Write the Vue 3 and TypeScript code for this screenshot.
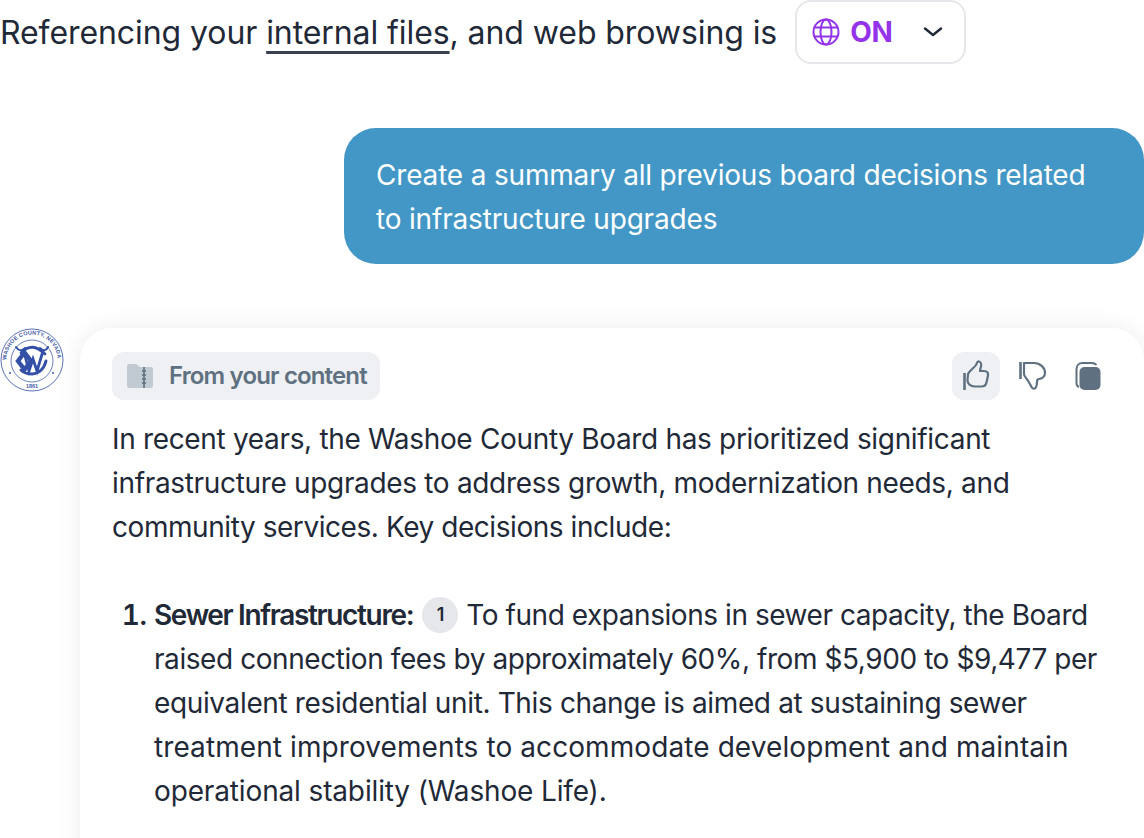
<script setup lang="ts">
interface Line {
  text: string;
  tracking: number;
}

// per-line tracking, the fallback font runs a little different from the original
const intro: Line[] = [
  { text: 'In recent years, the Washoe County Board has prioritized significant', tracking: -0.33 },
  { text: 'infrastructure upgrades to address growth, modernization needs, and', tracking: -0.33 },
  { text: 'community services. Key decisions include:', tracking: -0.44 },
];

const decision: Line[] = [
  { text: 'raised connection fees by approximately 60%, from $5,900 to $9,477 per', tracking: -0.43 },
  { text: 'equivalent residential unit. This change is aimed at sustaining sewer', tracking: -0.36 },
  { text: 'treatment improvements to accommodate development and maintain', tracking: 0.09 },
  { text: 'operational stability (Washoe Life).', tracking: -0.14 },
];
</script>

<template>
  <div class="page">
    <div class="mode-line">
      <span class="mode-text">Referencing your <span class="files">internal files</span>, and web browsing is</span>
      <button class="mode-select">
        <svg class="globe" viewBox="0 0 28 28" fill="none" stroke="#9333ea" stroke-width="2">
          <circle cx="14" cy="14" r="12.5" />
          <ellipse cx="14" cy="14" rx="5.5" ry="12.5" />
          <path d="M3 9.5h22M3 18.5h22" />
        </svg>
        <span class="on">ON</span>
        <svg class="chevron" viewBox="0 0 20 12" fill="none" stroke="#1f2937" stroke-width="2.4" stroke-linecap="round" stroke-linejoin="round">
          <path d="M2 2.5 10 9l8-6.5" />
        </svg>
      </button>
    </div>

    <div class="question">
      <div class="bubble">Create a summary all previous board decisions related<br />to infrastructure upgrades</div>
    </div>

    <div class="answer">
      <svg class="seal" viewBox="0 0 64 64">
        <circle cx="32" cy="32" r="31" fill="#fff" stroke="#4a63ad" stroke-width="0.9" />
        <circle cx="32" cy="33" r="21" fill="none" stroke="#4a63ad" stroke-width="0.8" />
        <defs>
          <path id="seal-arc" d="M6.5 32a25.5 25.5 0 0 1 51 0" />
        </defs>
        <text class="seal-text"><textPath href="#seal-arc" textLength="78" lengthAdjust="spacing">WASHOE COUNTY, NEVADA</textPath></text>
        <text class="seal-text" x="32" y="60" text-anchor="middle">1861</text>
        <g fill="none" stroke="#3350a6" stroke-linecap="round">
          <path d="M18 33 24.500 24.500 31 33 24.500 41.500Z" stroke-width="4.400" />
          <path d="M24 24 29 43 33 31 37 43 43 23" stroke-width="2.800" />
          <path d="M21 25Q32 13 45 26" stroke-width="2.800" />
          <path d="M46 33Q43 45 32 46 25 46 21 42" stroke-width="3" />
          <path d="M16 19Q20 25 25 20M40 20Q45 25 48 19" stroke-width="2" />
        </g>
        <circle cx="10" cy="45" r="1" fill="#3f5aa8" />
        <circle cx="53" cy="45" r="1" fill="#3f5aa8" />
      </svg>

      <div class="card">
        <div class="card-head">
          <div class="source-chip">
            <svg class="folder" viewBox="0 0 26 26">
              <path d="M0 3a2 2 0 0 1 2-2h7l4 3h11a2 2 0 0 1 2 2v17a2 2 0 0 1-2 2H2a2 2 0 0 1-2-2Z" fill="#c1c9d2" />
              <path d="M17 4v21M15 8h4M15 12h4M15 16h4M15 20h4" stroke="#5f7080" stroke-width="1.6" fill="none" />
            </svg>
            <span>From your content</span>
          </div>
          <div class="actions">
            <button class="action active">
              <svg viewBox="0 0 48 48" fill="none" stroke="#5f7080" stroke-width="2.2" stroke-linejoin="round" stroke-linecap="round">
                <path d="M12.500 21v17" stroke-width="2.600" stroke-linecap="butt" />
                <path d="M16 22c2-4 6-6 8-9 1-2 1-4 3-3.500 2 .5 2.500 3 2 5-.3 1.500-1 3-1 4.500h4c3 0 4.500 2 4 4.500l-1.500 7c-.5 2.500-2.500 4-5 4h-7c-4 0-7-3-7-6Z" />
              </svg>
            </button>
            <button class="action">
              <svg viewBox="0 0 48 48" fill="none" stroke="#5f7080" stroke-width="2.2" stroke-linejoin="round" stroke-linecap="round">
                <path d="M12.500 10v17" stroke-width="2.600" stroke-linecap="butt" />
                <path d="M16 11h10c6 0 11 4.500 11 10 0 3.500-3 6-6 6-1.500 0-2 1-2 3 0 2-.3 4-1.200 5.500-.8 1.300-3 1.500-4 0-1-2-2.500-4.500-4-7-1.300-2.200-3.800-4-3.800-6.500Z" />
              </svg>
            </button>
            <button class="action">
              <svg viewBox="0 0 48 48">
                <path d="M15 35c-1.500-.5-2.500-2-2.500-4V17c0-3.500 2.500-6 6-6h9c2.500 0 4 .7 5 2" fill="none" stroke="#5f7080" stroke-width="2" />
                <rect x="15.500" y="15" width="21" height="23" rx="5" fill="#5f7080" />
              </svg>
            </button>
          </div>
        </div>

        <p class="intro">
          <span v-for="line in intro" :key="line.text" class="line" :style="{ letterSpacing: line.tracking + 'px' }">{{ line.text }}</span>
        </p>

        <ol class="decisions">
          <li>
            <div class="first-line"><b>Sewer Infrastructure:</b><span class="cite">1</span>To fund expansions in sewer capacity, the Board</div>
            <span v-for="line in decision" :key="line.text" class="line" :style="{ letterSpacing: line.tracking + 'px' }">{{ line.text }}</span>
          </li>
        </ol>
      </div>
    </div>
  </div>
</template>

<style scoped>
.page {
  width: 1144px;
  height: 838px;
  overflow: hidden;
  background: #fff;
  color: #1f2937;
  font-family: Inter, "Noto Sans", sans-serif;
  font-size: 28px;
  line-height: 44px;
  letter-spacing: -0.3px;
}

.mode-line {
  display: flex;
  align-items: center;
  gap: 18px;
  height: 64px;
  font-size: 32px;
  letter-spacing: -0.08px;
}

.mode-text {
  padding-top: 2px;
}

.files {
  text-decoration: underline;
  text-underline-offset: 7px;
  text-decoration-thickness: 2.5px;
  text-decoration-color: #374151;
}

.mode-select {
  display: flex;
  align-items: center;
  width: 171px;
  height: 64px;
  padding: 0 0 0 15px;
  background: #fff;
  border: 2px solid #e5e7eb;
  border-radius: 16px;
  font: inherit;
  font-size: 28px;
  letter-spacing: -0.3px;
}

.globe {
  width: 28px;
  height: 28px;
}

.on {
  margin-left: 10px;
  color: #9333ea;
  font-weight: 700;
}

.chevron {
  width: 20px;
  height: 12px;
  margin-left: 31px;
}

.question {
  display: flex;
  justify-content: flex-end;
  margin-top: 64px;
}

.bubble {
  width: 800px;
  height: 136px;
  box-sizing: border-box;
  padding: 25px 32px;
  border-radius: 32px;
  background: #4397c6;
  color: #fff;
  letter-spacing: -0.18px;
}

.answer {
  display: flex;
  gap: 16px;
  margin-top: 64px;
}

.seal {
  flex: none;
  width: 64px;
  height: 64px;
}

.seal-text {
  font-family: "Liberation Sans", sans-serif;
  font-size: 5.5px;
  font-weight: 700;
  fill: #3f5aa8;
  letter-spacing: 0;
}

.card {
  flex: 1;
  min-height: 520px;
  padding: 24px 32px;
  border-radius: 32px 32px 0 0;
  background: #fff;
  box-shadow: 0 0 24px rgba(15, 23, 42, 0.08);
}

.card-head {
  display: flex;
  justify-content: space-between;
  height: 48px;
  margin-bottom: 17px;
}

.source-chip {
  display: flex;
  align-items: center;
  gap: 16px;
  box-sizing: border-box;
  width: 268px;
  height: 48px;
  padding: 0 0 0 15px;
  border-radius: 12px;
  background: #eef0f3;
  color: #5f7080;
  font-size: 24px;
  font-weight: 600;
  letter-spacing: -0.85px;
}

.folder {
  width: 26px;
  height: 26px;
}

.actions {
  display: flex;
  gap: 8px;
}

.action {
  display: flex;
  width: 48px;
  height: 48px;
  padding: 0;
  border: none;
  border-radius: 12px;
  background: none;
}

.action.active {
  background: #eef0f3;
}

.action svg {
  width: 48px;
  height: 48px;
}

.line {
  display: block;
  white-space: nowrap;
}

.intro {
  margin: 0 0 44px;
}

.decisions {
  margin: 0;
  padding: 0 0 0 42px;
}

.decisions li::marker {
  font-weight: 600;
}

.first-line {
  display: flex;
  align-items: center;
  white-space: nowrap;
  letter-spacing: -0.45px;
}

.first-line b {
  font-weight: 600;
  letter-spacing: -1.35px;
}

.cite {
  display: flex;
  align-items: center;
  justify-content: center;
  flex: none;
  width: 36px;
  height: 36px;
  margin: 0 8px 0 9px;
  border-radius: 50%;
  background: #e5e7eb;
  font-size: 18px;
  font-weight: 600;
  line-height: 1;
}
</style>
